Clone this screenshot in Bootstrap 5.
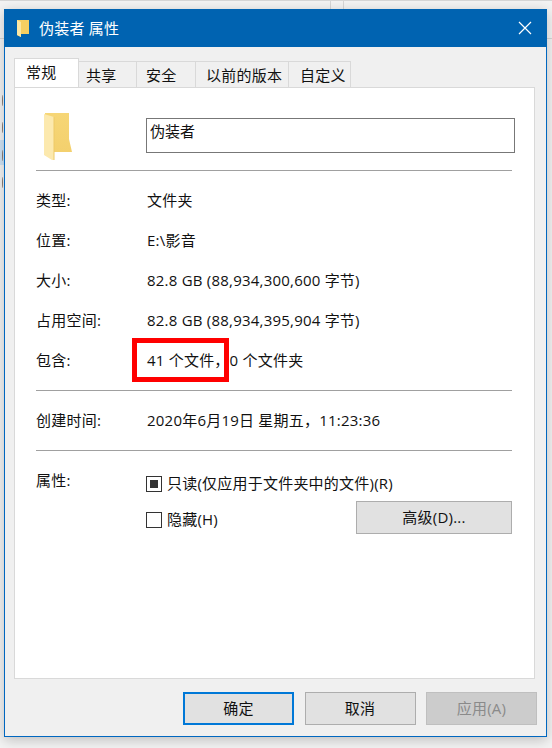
<!DOCTYPE html>
<html lang="zh">
<head>
<meta charset="utf-8">
<title>伪装者 属性</title>
<link href="https://cdn.jsdelivr.net/npm/bootstrap@5.3.0/dist/css/bootstrap.min.css" rel="stylesheet">
<style>
html,body{height:748px;overflow:hidden}
body{background:#f3f3f3;color:#111;font-family:"Open Sans","Noto Sans CJK SC",sans-serif;font-size:15px;letter-spacing:.22px;line-height:20px;padding:9px 5px 11px 4px}
.dlg{position:relative;height:728px;background:#f0f0f0;border:1px solid #0067c0;border-top:0;box-shadow:0 3px 12px rgba(0,0,0,.22)}
.dlg-title{height:38px;background:#0063b1;color:#fff;margin:0 -1px;padding-left:13px}
.dlg-title span{margin-left:9px;font-size:15px}
.closer{width:44px;height:38px}
.dlg-tabs{margin:10px 11px 0 9px;border:0;height:30px;align-items:flex-end;flex-wrap:nowrap}
.dlg-tabs .nav-link{height:26px;border:1px solid #d9d9d9;border-bottom:0;border-left:0;border-radius:0;margin:0;padding:0;background:#f0f0f0;color:#111;line-height:27px}
.dlg-tabs .nav-link.active{height:30px;background:#fff;color:#111;border-color:#d9d9d9;border-left:1px solid #d9d9d9;line-height:27px;margin-bottom:-1px;padding-bottom:4px}
.t1{width:65px;padding-left:11px!important}.t2{width:58px;padding-left:7px!important}.t3{width:59px;padding-left:9px!important}.t4{width:93px;padding-left:10px!important}.t5{width:62px;padding-left:11px!important}
.panel-body{height:592px;margin:0 11px 0 9px;background:#fff;border:1px solid #d9d9d9;padding:0 19px 0 21px}
.name-row{height:82px;padding-top:25px}
.lbl{width:111px;flex:none}
.lbl-n{width:110px;flex:none}
.name-box{width:369px;height:35px;margin-top:5px;border:1px solid #777;border-radius:0;padding:0 3px 10px;line-height:24px;font-size:15px;color:#111}
.name-box:focus{border-color:#777;box-shadow:none}
.sep{margin:0;border-top:1px solid #a0a0a0;opacity:1;width:476px}
.info-row{height:40px;padding-bottom:2px}
.grp1{padding:10px 0 9px}
.grp2 .info-row{height:59px}
.attr{padding-top:19px}
.chk{width:16px;height:16px;border:1px solid #333;background:#fff;flex:none;margin-right:5px;padding:3px}
.chk i{display:block;width:8px;height:8px;background:#333}
.attr-col{padding-top:1px}
.chk-top{height:30px;padding-top:3px}
.chk-line{height:20px}
.chk-line span:last-child{padding-bottom:2px}
.hid-line{margin-top:9px}
.adv{width:156px;height:33px;margin-right:3px;background:#e1e1e1;border:1px solid #adadad;border-radius:0;color:#111;font-size:15px;letter-spacing:.22px;padding:0 0 2px;line-height:20px}
.stamp{position:absolute;left:132px;top:338px;width:97px;height:44px;border:5px solid #f00;pointer-events:none}
.foot{height:57px;padding:13px 9px 0 0;gap:10.5px}
.wbtn{width:111px;height:33px;background:#e1e1e1;border:1px solid #adadad;border-radius:0;color:#111;font-size:15px;letter-spacing:.22px;padding:0 0 2px;line-height:20px}
.wbtn.pri{border:2px solid #0078d7}
.wbtn:disabled{background:#cccccc;border-color:#bfbfbf;color:#8a8a8a;opacity:1}
.bg-line{position:absolute;background:#d6d6d6}
.bl-top{left:0;top:0;width:552px;height:1px}
.bl-mid{left:0;top:38px;width:552px;height:1px}
.bl-a{left:330px;top:0;width:1px;height:9px}
.bl-b{left:343px;top:0;width:1px;height:9px}
.bl-sel{position:absolute;left:0;top:140px;width:4px;height:25px;background:#cfe3f5}
.bl-g{position:absolute;left:2px;width:2px;height:11px;border-left:1px solid #8d7d74;border-radius:50%}
.g1{top:95px}.g2{top:122px}.g3{top:150px}.g4{top:177px}
</style>
</head>
<body class="position-relative">
<i class="bg-line bl-top"></i><i class="bg-line bl-mid"></i><i class="bg-line bl-a"></i><i class="bg-line bl-b"></i><i class="bl-sel"></i>
<i class="bl-g g1"></i><i class="bl-g g2"></i><i class="bl-g g3"></i><i class="bl-g g4"></i>
<div class="dlg d-flex flex-column">
  <div class="dlg-title d-flex align-items-center">
    <svg width="13" height="18" viewBox="0 0 13 18"><path d="M0 1h12v14H4v3l-4-2z" fill="#f6cf62"/><path d="M0 1l4 2v15l-4-2z" fill="#fbe7a3"/></svg>
    <span class="flex-grow-1">伪装者 属性</span>
    <div class="closer d-flex align-items-center justify-content-center">
      <svg width="14" height="14" viewBox="0 0 14 14"><path d="M1 1l12 12M13 1L1 13" stroke="#fff" stroke-width="1.2" fill="none"/></svg>
    </div>
  </div>
  <ul class="nav nav-tabs dlg-tabs">
    <li class="nav-item"><a class="nav-link active t1" href="#">常规</a></li>
    <li class="nav-item"><a class="nav-link t2" href="#">共享</a></li>
    <li class="nav-item"><a class="nav-link t3" href="#">安全</a></li>
    <li class="nav-item"><a class="nav-link t4" href="#">以前的版本</a></li>
    <li class="nav-item"><a class="nav-link t5" href="#">自定义</a></li>
  </ul>
  <div class="panel-body">
    <div class="name-row d-flex">
      <div class="lbl-n">
        <svg width="30" height="48" viewBox="0 0 30 48" class="d-block ms-2">
          <defs><linearGradient id="fg" x1="0" y1="0" x2="0" y2="1"><stop offset="0" stop-color="#f6d676"/><stop offset="1" stop-color="#f3cf6c"/></linearGradient></defs>
          <path d="M1 0h24v26l3 13H10v8l-9-5z" fill="url(#fg)"/>
          <path d="M0 1l10 3v43H8l-8-5z" fill="#fce9ae"/>
          <path d="M10 4v43" stroke="#eeca68" stroke-width="1" fill="none"/>
        </svg>
      </div>
      <input class="name-box form-control" value="伪装者">
    </div>
    <hr class="sep">
    <div class="grp1">
      <div class="info-row d-flex align-items-center"><div class="lbl">类型:</div><div>文件夹</div></div>
      <div class="info-row d-flex align-items-center"><div class="lbl">位置:</div><div>E:\影音</div></div>
      <div class="info-row d-flex align-items-center"><div class="lbl">大小:</div><div>82.8 GB (88,934,300,600 字节)</div></div>
      <div class="info-row d-flex align-items-center"><div class="lbl">占用空间:</div><div>82.8 GB (88,934,395,904 字节)</div></div>
      <div class="info-row d-flex align-items-center"><div class="lbl">包含:</div><div>41 个文件&#xFF0C;0 个文件夹</div></div>
    </div>
    <hr class="sep">
    <div class="grp2"><div class="info-row d-flex align-items-center"><div class="lbl">创建时间:</div><div>2020年6月19日 星期五&#xFF0C;11:23:36</div></div></div>
    <hr class="sep">
    <div class="attr d-flex">
      <div class="lbl-n">属性:</div>
      <div class="attr-col flex-grow-1">
        <div class="chk-top"><div class="chk-line d-flex align-items-center"><span class="chk"><i></i></span><span>只读(仅应用于文件夹中的文件)(R)</span></div></div>
        <div class="d-flex justify-content-between align-items-start">
          <div class="chk-line hid-line d-flex align-items-center"><span class="chk"></span><span>隐藏(H)</span></div>
          <button class="btn adv" type="button">高级(D)...</button>
        </div>
      </div>
    </div>
  </div>
  <div class="foot d-flex justify-content-end">
    <button class="btn wbtn pri" type="button">确定</button>
    <button class="btn wbtn" type="button">取消</button>
    <button class="btn wbtn" type="button" disabled>应用(A)</button>
  </div>
</div>
<div class="stamp"></div>
</body>
</html>
